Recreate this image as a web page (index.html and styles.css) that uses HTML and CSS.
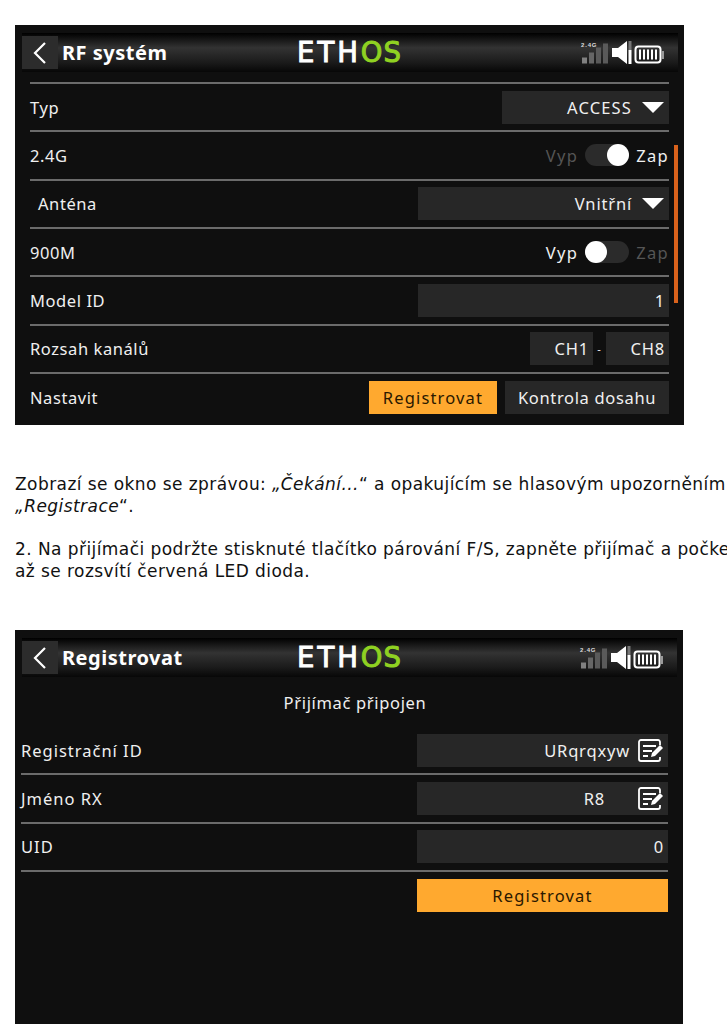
FILE: index.html
```html
<!DOCTYPE html>
<html lang="cs">
<head>
  <meta charset="UTF-8">
  <meta name="viewport" content="width=device-width,initial-scale=1">
  <title>RF systém</title>
  <link rel="stylesheet" href="styles.css">
</head>
<body>
  <svg class="defs" width="0" height="0">
    <symbol id="status" viewBox="0 0 86 24">
      <rect x="2" y="16.500" width="5" height="6" fill="#808080"/>
      <rect x="9" y="11.500" width="5" height="11" fill="#666"/>
      <rect x="16" y="6.500" width="5" height="16" fill="#5a5a5a"/>
      <rect x="23" y="2.500" width="5" height="20" fill="#5a5a5a"/>
      <path d="M32 7h6l9-7v23l-9-7h-6z" fill="#fff"/>
      <rect x="48.500" y="0" width="3" height="9" fill="#777"/>
      <rect x="48.500" y="9" width="3" height="14" fill="#fff"/>
      <rect x="55.500" y="5.500" width="25" height="16" rx="3" fill="none" stroke="#fff" stroke-width="2"/>
      <path d="M60 8.500v10M64 8.500v10M68 8.500v10M72 8.500v10M76 8.500v10" stroke="#fff" stroke-width="2"/>
      <rect x="81" y="10" width="3" height="8" fill="#999"/>
    </symbol>
    <symbol id="edit" viewBox="0 0 26 23">
      <path d="M22 6V3a2 2 0 0 0-2-2H3a2 2 0 0 0-2 2v17a2 2 0 0 0 2 2h17a2 2 0 0 0 2-2v-2" fill="none" stroke="#fff" stroke-width="1.800"/>
      <path d="M5 7h13M5 12h9M5 17h5" stroke="#fff" stroke-width="1.800"/>
      <path d="M13 18l1-4 8-8 3 3-8 8z" fill="#fff"/>
    </symbol>
  </svg>

  <div class="screen">
    <div class="topbar">
      <div class="back"><svg width="16" height="24" viewBox="0 0 16 24"><path d="M13 2L3 12l10 10" fill="none" stroke="#fff" stroke-width="2.200"/></svg></div>
      <div class="title">RF systém</div>
      <div class="logo">ETH<span>OS</span></div>
      <svg class="status" width="86" height="24"><use href="#status"/><text x="1" y="6" class="band">2.4G</text></svg>
    </div>
    <div class="rows inset">
      <div class="row">
        <span>Typ</span>
        <div class="field w-s wide">ACCESS <i class="caret"></i></div>
      </div>
      <div class="row">
        <span>2.4G</span>
        <div class="switch"><em class="dim">Vyp</em><b class="track on"></b><em>Zap</em></div>
      </div>
      <div class="row sub">
        <span>Anténa</span>
        <div class="field w-l">Vnitřní <i class="caret"></i></div>
      </div>
      <div class="row">
        <span>900M</span>
        <div class="switch"><em>Vyp</em><b class="track"></b><em class="dim">Zap</em></div>
      </div>
      <div class="row">
        <span>Model ID</span>
        <div class="field w-l">1</div>
      </div>
      <div class="row">
        <span>Rozsah kanálů</span>
        <div class="range">
          <div class="field w-ch">CH1</div>
          <small>-</small>
          <div class="field w-ch">CH8</div>
        </div>
      </div>
      <div class="row last">
        <span>Nastavit</span>
        <div class="buttons">
          <div class="btn orange b-reg">Registrovat</div>
          <div class="btn b-range">Kontrola dosahu</div>
        </div>
      </div>
    </div>
    <div class="scroll"></div>
  </div>

  <div class="copy">
    <p>Zobrazí se okno se zprávou: <em>„Čekání...</em>“ a opakujícím se hlasovým upozorněním<br><em>„Registrace</em>“.</p>
    <p>2. Na přijímači podržte stisknuté tlačítko párování F/S, zapněte přijímač a počkejte,<br>až se rozsvítí červená LED dioda.</p>
  </div>

  <div class="screen second">
    <div class="topbar">
      <div class="back"><svg width="16" height="24" viewBox="0 0 16 24"><path d="M13 2L3 12l10 10" fill="none" stroke="#fff" stroke-width="2.200"/></svg></div>
      <div class="title">Registrovat</div>
      <div class="logo">ETH<span>OS</span></div>
      <svg class="status" width="86" height="24"><use href="#status"/><text x="1" y="6" class="band">2.4G</text></svg>
    </div>
    <div class="message">Přijímač připojen</div>
    <div class="rows">
      <div class="row">
        <span>Registrační ID</span>
        <div class="field w-l">URqrqxyw <svg class="edit" width="26" height="23"><use href="#edit"/></svg></div>
      </div>
      <div class="row">
        <span>Jméno RX</span>
        <div class="field w-l"><span class="name">R8</span> <svg class="edit" width="26" height="23"><use href="#edit"/></svg></div>
      </div>
      <div class="row">
        <span>UID</span>
        <div class="field w-l">0</div>
      </div>
      <div class="row last">
        <span></span>
        <div class="btn orange w-l">Registrovat</div>
      </div>
    </div>
  </div>
</body>
</html>
```

FILE: styles.css
```css
:root {
  --screen-bg: #0f0f0f;
  --field-bg: #272727;
  --line: #6b6b6b;
  --orange: #ffa92f;
  --screen-font: 'Noto Sans', 'Open Sans', sans-serif;
}
html, body {
  margin: 0;
  padding: 0;
  height: 1024px;
  overflow: hidden;
  background: #fff;
}
body {
  padding-top: 25px;
  box-sizing: border-box;
}
.defs { position: absolute; }
.band {
  font-family: 'Liberation Sans', sans-serif;
  font-size: 6px;
  font-weight: 700;
  fill: #ddd;
}
.screen {
  position: relative;
  box-sizing: border-box;
  width: 669px;
  height: 400px;
  margin-left: 15px;
  padding-top: 8px;
  background: var(--screen-bg);
  color: #f0f0f0;
  font-family: var(--screen-font);
  font-size: 16.500px;
  letter-spacing: 0.05em;
}
.screen.second {
  width: 668px;
  height: 394px;
}
.topbar {
  display: flex;
  align-items: center;
  box-sizing: border-box;
  height: 39px;
  margin: 0 6px 0 7px;
  background: linear-gradient(180deg, #000 0, #333 38%, #1b1b1b 75%, #070707 100%);
}
.back {
  display: flex;
  align-items: center;
  justify-content: center;
  width: 36px;
  height: 33px;
  background: #2c2c2c;
}
.title {
  width: 235px;
  margin-left: 4px;
  color: #fff;
  font-size: 20px;
  font-weight: 700;
  letter-spacing: 0.025em;
}
.logo {
  width: 104px;
  padding-top: 1px;
  color: #fff;
  font-family: 'DejaVu Sans', sans-serif;
  font-size: 27.500px;
  line-height: 1;
  letter-spacing: 3px;
  -webkit-text-stroke: 1px currentColor;
}
.logo span {
  color: #8fd122;
  letter-spacing: 1px;
}
.status { margin-left: auto; margin-right: 12px; }

.rows {
  margin: 0 15px 0 6px;
}
.rows.inset {
  margin: 10px 15px 0 15px;
  border-top: 2px solid var(--line);
}
.row {
  display: flex;
  align-items: center;
  justify-content: space-between;
  box-sizing: border-box;
  height: 48.330px;
  border-bottom: 2px solid var(--line);
}
.row > span { letter-spacing: 0.035em; }
.second .row > span { letter-spacing: 0.06em; }
.row.last {
  height: 46.330px;
  border-bottom: 0;
}
.row.sub > span { margin-left: 8px; }

.field {
  display: flex;
  align-items: center;
  justify-content: flex-end;
  box-sizing: border-box;
  height: 33px;
  padding-right: 4px;
  background: var(--field-bg);
}
.field.wide { letter-spacing: 0.07em; }
.w-s { width: 167px; }
.w-l { width: 251px; }
.w-ch { width: 63px; }
.caret {
  width: 0;
  height: 0;
  margin: 0 1px 0 10px;
  border-left: 11.500px solid transparent;
  border-right: 11.500px solid transparent;
  border-top: 11px solid #fff;
}
.edit { margin-left: 8px; }
.name { margin-right: 25px; }

.switch {
  display: flex;
  align-items: center;
  gap: 7px;
}
.switch em {
  font-style: normal;
  letter-spacing: 0.08em;
}
.switch em.dim { color: #555; }
.track {
  display: block;
  position: relative;
  width: 44px;
  height: 22px;
  border-radius: 11px;
  background: #2b2b2b;
}
.track::after {
  content: "";
  position: absolute;
  top: 0;
  left: 0;
  width: 22px;
  height: 22px;
  border-radius: 50%;
  background: #fff;
}
.track.on::after { left: 22px; }

.range {
  display: flex;
  align-items: center;
}
.range small {
  width: 13px;
  text-align: center;
  font-size: 11px;
}
.buttons {
  display: flex;
  gap: 8px;
}
.btn {
  display: flex;
  align-items: center;
  justify-content: center;
  height: 33px;
  background: var(--field-bg);
}
.btn.orange {
  background: var(--orange);
  color: #2a1800;
  letter-spacing: 0.07em;
}
.b-reg { width: 128px; }
.b-range {
  width: 164px;
  letter-spacing: 0.04em;
}

.scroll {
  position: absolute;
  left: 659px;
  top: 120px;
  width: 4px;
  height: 158px;
  background: #d9621c;
}

.copy {
  height: 205px;
  margin-left: 15px;
  padding-top: 48px;
  box-sizing: border-box;
  color: #111;
  font-family: 'DejaVu Sans', Verdana, sans-serif;
  font-size: 17px;
  letter-spacing: 0.430px;
  line-height: 22px;
  white-space: nowrap;
}
.copy p { margin: 0 0 21px; }

.message {
  display: flex;
  align-items: center;
  justify-content: center;
  height: 46px;
  margin: 2px 0;
  padding-left: 12px;
  letter-spacing: 0.04em;
}
```
